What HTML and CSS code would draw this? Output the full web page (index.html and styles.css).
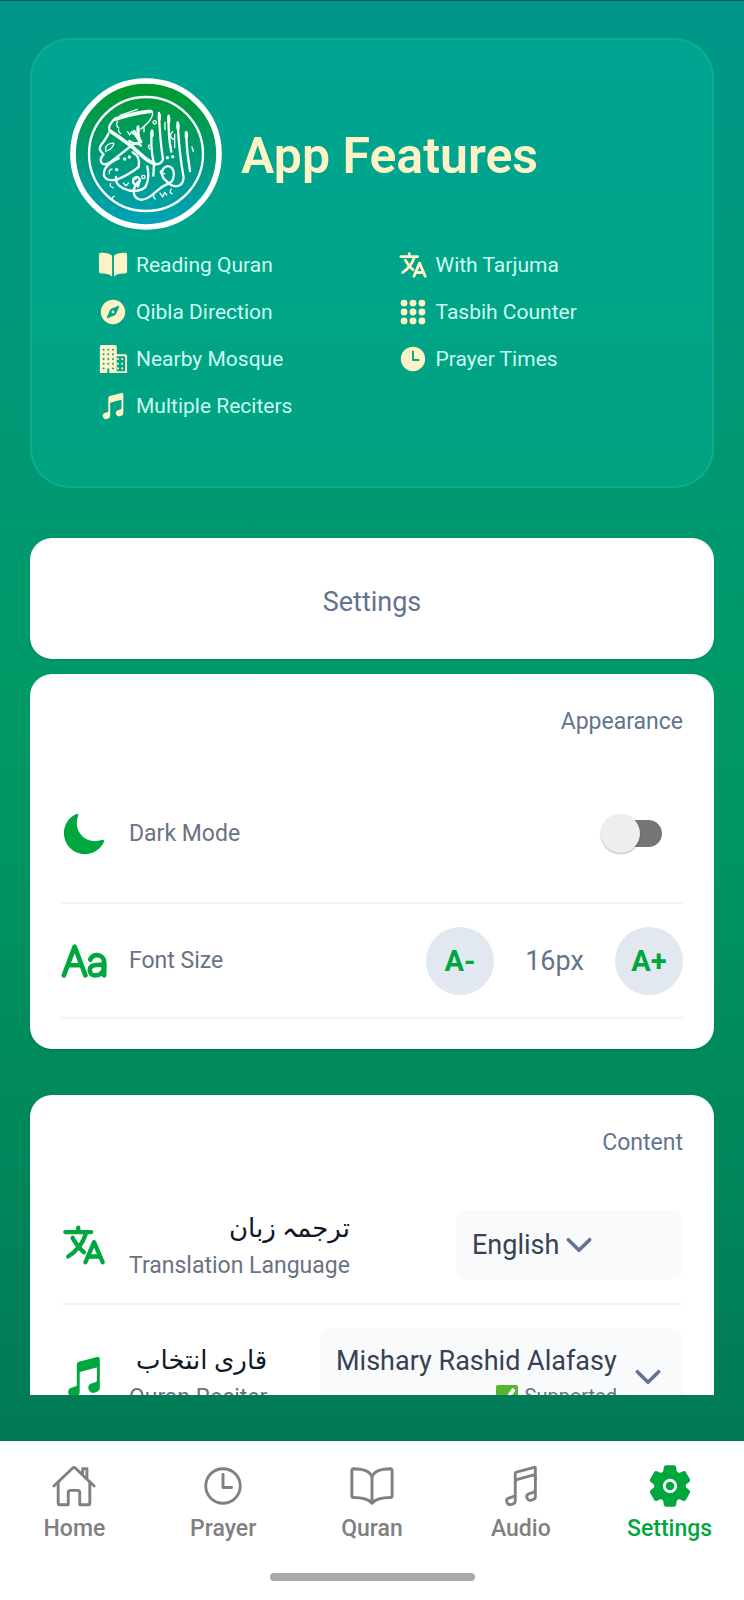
FILE: index.html
```html
<!DOCTYPE html>
<html lang="en">
<head>
<meta charset="utf-8">
<meta name="viewport" content="width=device-width, initial-scale=1">
<title>Settings</title>
<link rel="stylesheet" href="styles.css">
</head>
<body class="app">
<svg class="sprite" aria-hidden="true">
  <symbol id="language" viewBox="0 0 512 512"><g fill="none" stroke="currentColor" stroke-width="48" stroke-linecap="round" stroke-linejoin="round"><path d="M48 112h288M192 64v48M272 448l96-224 96 224M301.5 384h133M281.3 112S257 206 199 277 80 384 80 384"/><path d="M256 336s-35-27-72-75-56-85-56-85"/></g></symbol>
  <symbol id="notes" viewBox="0 0 512 512"><path fill="currentColor" d="M421.84 37.37a25.86 25.86 0 00-22.6-4.46L199.92 86.49A32.3 32.3 0 00176 118v226c0 6.74-4.36 12.56-11.11 14.83l-.12.05-52 18C92.88 383.53 80 402 80 423.91a55.54 55.54 0 0023.23 45.63A54.78 54.78 0 00135.34 480a55.82 55.82 0 0017.75-2.93l.38-.13 21.84-7.94A47.84 47.84 0 00208 423.91v-212c0-7.29 4.77-13.21 12.16-15.07l.21-.06L395 150.14a4 4 0 015 3.86v141.93c0 6.75-4.25 12.38-11.11 14.68l-.25.09-50.89 18.11A49.09 49.09 0 00304 375.92a55.67 55.67 0 0023.23 45.8 54.63 54.63 0 0049.88 7.35l.36-.12 21.84-7.95A47.83 47.83 0 00432 375.92V58a25.74 25.74 0 00-10.16-20.63z"/></symbol>
  <symbol id="chevron" viewBox="0 0 512 512"><path d="M112 184l144 144 144-144" fill="none" stroke="currentColor" stroke-width="48" stroke-linecap="round" stroke-linejoin="round"/></symbol>
</svg>

<main class="scroll">
  <section class="hero">
    <header class="hero-head">
      <svg class="logo" viewBox="30 25 456 456" role="img" aria-label="Quran emblem">
        <defs><linearGradient id="disc" x1="0" y1="0" x2="0" y2="1"><stop offset="0.05" stop-color="#009a30"/><stop offset="0.5" stop-color="#009b74"/><stop offset="0.95" stop-color="#00a2b4"/></linearGradient></defs>
        <circle cx="258" cy="253" r="219" fill="url(#disc)" stroke="#fff" stroke-width="17"/>
        <circle cx="258" cy="253" r="171" fill="none" stroke="#fff" stroke-width="7"/>
        <g fill="none" stroke="#f2fffa" stroke-linecap="round" stroke-linejoin="round">
          <g stroke-width="4">
            <path d="M180 137l52-18"/>
            <path d="M277 126q6 20-34 52"/>
            <path d="M138 246q-6-18 12-24t8 8-16 12"/>
            <path d="M173 155q-8 10 3 20M176 180q-1 10 6 12M203 186l6 10 6-10 5 8M252 170v16M315 158v22M396 232l4 14M338 186q-12 10-2 20t8-12v40"/>
            <path d="M152 342q-6 8 8 12M162 380q-8 4-4 12M284 370q-8 12 2 18M300 370l8 12 6-14 6 8M334 358q-8 12 2 14M190 340l8 8 8-8M156 298q-10 2-8 14"/>
            <circle cx="284" cy="158" r="5"/><circle cx="250" cy="322" r="5"/>
            <path d="M306 302q-8 2-4 8t12 2M268 226q-6 6 2 12"/>
          </g>
          <g stroke-width="7">
            <path d="M148 180q-4-12 14-30 50-20 113-25"/>
            <path d="M145 192q-6 14-22 34-10 14 8 28-14 14-6 26 10 10 28-4l64-50q16-10 26 2"/>
            <path d="M234 170q0 24 6 46-14 12-32-2"/>
            <path d="M297 130q2 74 12 140-8 16-26 14"/>
            <path d="M326 138q-2 60 8 108"/>
            <path d="M276 182q-6 52 6 100l-2 36"/>
            <path d="M353 158q4 90 18 166-2 24-22 26-18 0-32-18-18-14-8-34 14-16 28-2 10 20-2 40-30 14-52 34-24 22-42 20-20-4-20-26 2-16 14-28"/>
            <path d="M378 188q2 60 12 116"/>
            <path d="M218 248q24 12 18 44-30 24-66 38-32 6-38-12-4-32 44-52"/>
            <path d="M168 322q-4 22 22 34 38 18 66-4 14-22 6-62"/>
            <path d="M232 348q-16-4-12-20 12-14 20 2l-6 20"/>
          </g>
          <path stroke-width="11" d="M150 184q58 38 92 70 20 20 42 28M222 186l20 30M167 148q54-18 104-23"/>
          <path stroke-width="10" d="M194 268h.1M208 262h.1M322 264h.1M338 261h.1M170 300h.1M226 326h.1"/>
          <path stroke-width="10" d="M298 136v12M326 144v12M354 164v12M379 190v12M276 186v12M234 174v10"/>
        </g>
      </svg>
      <h1 class="title">App Features</h1>
    </header>
    <ul class="features">
      <li class="feature"><svg class="icon-s" viewBox="0 0 512 512"><path fill="currentColor" d="M202.24 74C166.11 56.75 115.61 48.3 48 48a31.36 31.36 0 00-17.92 5.33A32 32 0 0016 79.9V366c0 19.34 13.76 33.93 32 33.93 71.07 0 142.36 6.64 185.06 47a4.11 4.11 0 006.94-3V106.82a15.89 15.89 0 00-5.46-12A143 143 0 00202.24 74zM481.92 53.3A31.33 31.33 0 00464 48c-67.61.3-118.11 8.71-154.24 26a143.31 143.31 0 00-32.31 20.78 15.93 15.93 0 00-5.45 12v337.13a3.93 3.93 0 006.68 2.81c25.67-25.5 70.72-46.82 185.36-46.81a32 32 0 0032-32v-288a32 32 0 00-14.12-26.61z"/></svg>Reading Quran</li>
      <li class="feature"><svg class="icon-s"><use href="#language"/></svg>With Tarjuma</li>
      <li class="feature"><svg class="icon-s" viewBox="0 0 512 512" fill="currentColor"><circle cx="256" cy="256" r="24"/><path d="M256 48C141.31 48 48 141.31 48 256s93.31 208 208 208 208-93.31 208-208S370.69 48 256 48zm105.07 113.33l-46.88 117.2a64 64 0 01-35.66 35.66l-117.2 46.88a8 8 0 01-10.4-10.4l46.88-117.2a64 64 0 0135.66-35.66l117.2-46.88a8 8 0 0110.4 10.4z"/></svg>Qibla Direction</li>
      <li class="feature"><svg class="icon-s" viewBox="0 0 512 512"><path d="M104 104h.1M256 104h.1M408 104h.1M104 256h.1M256 256h.1M408 256h.1M104 408h.1M256 408h.1M408 408h.1" stroke="currentColor" stroke-width="116" stroke-linecap="round"/></svg>Tasbih Counter</li>
      <li class="feature"><svg class="icon-s" viewBox="0 0 512 512"><path fill="currentColor" fill-rule="evenodd" d="M56 16H288a32 32 0 0132 32V176H464a32 32 0 0132 32V480a16 16 0 01-16 16H192V416H160V496H48a16 16 0 01-16-16V48A32 32 0 0156 16zM320 208V464H464V208z"/><path d="M96 96h.1M176 96h.1M256 96h.1M96 176h.1M176 176h.1M256 176h.1M96 256h.1M176 256h.1M256 256h.1M96 336h.1M176 336h.1M256 336h.1M96 416h.1M256 416h.1" stroke="#00a487" stroke-width="34" stroke-linecap="round"/><path d="M340 256h.1M412 256h.1M340 336h.1M412 336h.1M340 416h.1M412 416h.1" stroke="currentColor" stroke-width="36" stroke-linecap="round"/></svg>Nearby Mosque</li>
      <li class="feature"><svg class="icon-s" viewBox="0 0 512 512"><path fill="currentColor" d="M256 48C141.13 48 48 141.13 48 256s93.13 208 208 208 208-93.13 208-208S370.87 48 256 48zm96 240h-96a16 16 0 01-16-16V128a16 16 0 0132 0v128h80a16 16 0 010 32z"/></svg>Prayer Times</li>
      <li class="feature"><svg class="icon-s"><use href="#notes"/></svg>Multiple Reciters</li>
    </ul>
  </section>

  <h2 class="card banner">Settings</h2>

  <section class="card">
    <h3 class="card-title">Appearance</h3>
    <div class="row row-tall">
      <svg class="icon-m" viewBox="0 0 512 512"><path fill="currentColor" d="M264 480A232 232 0 0132 248c0-94 54-178.28 137.61-214.67a16 16 0 0121.06 21.06C181.07 76.43 176 104.66 176 136c0 110.28 89.72 200 200 200 31.34 0 59.57-5.07 81.61-14.67a16 16 0 0121.06 21.06C442.28 426 358 480 264 480z"/></svg>
      <label class="label" for="dark">Dark Mode</label>
      <input class="switch" type="checkbox" role="switch" id="dark">
    </div>
    <div class="row">
      <svg class="icon-m" viewBox="0 0 512 512" fill="none" stroke="currentColor" stroke-width="52" stroke-linecap="round" stroke-linejoin="round"><path d="M32 415.5l120-320 120 320M230 303.5H74M326 239.5c12.19-28.69 41-48 74-48h0c46 0 80 32 80 80v144"/><path d="M320 358.5c0 36 26.86 58 60 58 54 0 100-27 100-106v-15c-20 0-58 1-92 5-32.77 3.86-68 19-68 58z"/></svg>
      <span class="label">Font Size</span>
      <div class="stepper">
        <button class="step" type="button" aria-label="Decrease font size">A-</button>
        <output class="size">16px</output>
        <button class="step" type="button" aria-label="Increase font size">A+</button>
      </div>
    </div>
  </section>

  <section class="card card-content">
    <h3 class="card-title">Content</h3>
    <div class="row">
      <svg class="icon-m"><use href="#language"/></svg>
      <label class="label" for="lang"><span class="urdu" lang="ur" dir="rtl">ترجمہ زبان</span>Translation Language</label>
      <div class="picker picker-lang">
        <select class="select" id="lang"><option>English</option></select>
        <svg class="chevron"><use href="#chevron"/></svg>
      </div>
    </div>
    <div class="row">
      <svg class="icon-m"><use href="#notes"/></svg>
      <label class="label" for="reciter"><span class="urdu" lang="ur" dir="rtl">قاری انتخاب</span>Quran Reciter</label>
      <div class="picker picker-reciter">
        <div class="reciter">
          <select class="select" id="reciter"><option>Mishary Rashid Alafasy</option></select>
          <span class="status"><svg class="check" viewBox="0 0 22 22"><rect width="22" height="22" rx="2" fill="#58b530"/><path d="M4 11l5 6 9-13" fill="none" stroke="#fff" stroke-width="4"/></svg>Supported</span>
        </div>
        <svg class="chevron"><use href="#chevron"/></svg>
      </div>
    </div>
  </section>
</main>

<footer class="dock">
  <nav class="tabs">
    <a class="tab" href="#home"><svg class="icon-m line" viewBox="0 0 512 512"><path d="M80 212v236a16 16 0 0016 16h96V328a24 24 0 0124-24h80a24 24 0 0124 24v136h96a16 16 0 0016-16V212"/><path d="M480 256L266.89 52c-5-5.28-16.69-5.34-21.78 0L32 256M400 179V64h-48v69"/></svg>Home</a>
    <a class="tab" href="#prayer"><svg class="icon-m line" viewBox="0 0 512 512"><path d="M256 64C150 64 64 150 64 256s86 192 192 192 192-86 192-192S362 64 256 64z"/><path d="M256 128v144h96"/></svg>Prayer</a>
    <a class="tab" href="#quran"><svg class="icon-m line" viewBox="0 0 512 512"><path d="M256 160c16-63.16 76.43-95.41 208-96a15.94 15.94 0 0116 16v288a16 16 0 01-16 16c-128 0-177.45 25.81-208 64-30.37-38-80-64-208-64-9.88 0-16-8.05-16-17.93V80a15.94 15.94 0 0116-16c131.57.59 192 32.84 208 96zM256 160v288"/></svg>Quran</a>
    <a class="tab" href="#audio"><svg class="icon-m line" viewBox="0 0 512 512"><path d="M192 218v-6c0-14.84 10-27 24.24-30.59l174.59-46.68A20 20 0 01416 154v22"/><path d="M416 295.94v80c0 13.91-8.93 25.59-22 30l-22 8c-25.9 8.72-52-10.42-52-38h0a33.37 33.37 0 0123-32l51-18.15c13.07-4.4 22-15.94 22-29.85V58a10 10 0 00-12.6-9.61L204 102a16.48 16.48 0 00-12 16v226c0 13.91-8.93 25.6-22 30l-52 18c-13.88 4.68-22 17.22-22 32h0c0 27.58 26.52 46.55 52 38l22-8c13.07-4.4 22-16.08 22-30v-226M416 176v120"/></svg>Audio</a>
    <a class="tab tab-active" href="#settings" aria-current="page"><svg class="icon-m" viewBox="0 0 512 512" fill="currentColor"><circle cx="256" cy="256" r="48"/><path d="M470.39 300l-.47-.38-31.56-24.75a16.11 16.11 0 01-6.1-13.33v-11.56a16 16 0 016.11-13.22L469.92 212l.47-.38a26.68 26.68 0 005.9-34.06l-42.71-73.9a1.59 1.59 0 01-.13-.22A26.86 26.86 0 00401 92.14l-.35.13-37.1 14.93a15.94 15.94 0 01-14.47-1.29q-4.92-3.1-10-5.86a15.94 15.94 0 01-8.19-11.82l-5.59-39.59-.12-.72A27.22 27.22 0 00298.76 26h-85.52a26.92 26.92 0 00-26.45 22.39l-.09.56-5.57 39.67a16 16 0 01-8.13 11.82 175.21 175.21 0 00-10 5.82 15.92 15.92 0 01-14.43 1.27l-37.13-15-.35-.14a26.87 26.87 0 00-32.48 11.34l-.13.22-42.77 73.95a26.71 26.71 0 005.9 34.1l.47.38 31.56 24.75a16.11 16.11 0 016.1 13.33v11.56a16 16 0 01-6.11 13.22L42.08 300l-.47.38a26.68 26.68 0 00-5.9 34.06l42.71 73.9a1.59 1.59 0 01.13.22 26.86 26.86 0 0032.45 11.3l.35-.13 37.07-14.93a15.94 15.94 0 0114.47 1.29q4.92 3.11 10 5.86a15.94 15.94 0 018.19 11.82l5.56 39.59.12.72A27.22 27.22 0 00213.24 486h85.52a26.92 26.92 0 0026.45-22.39l.09-.56 5.57-39.67a16 16 0 018.18-11.82c3.42-1.84 6.76-3.79 10-5.82a15.92 15.92 0 0114.43-1.27l37.13 14.95.35.14a26.85 26.85 0 0032.48-11.34 2.53 2.53 0 01.13-.22l42.71-73.89a26.7 26.7 0 00-5.89-34.11zm-134.48-40.24a80 80 0 11-83.66-83.67 80.21 80.21 0 0183.66 83.67z"/></svg>Settings</a>
  </nav>
  <div class="grip"></div>
</footer>
</body>
</html>
```

FILE: styles.css
```css
:root {
  --green: #00a63e;
  --slate: #62748e;
  --cream: #fef3c6;
  --mint: #cbfbf1;
}

* {
  box-sizing: border-box;
}

.app {
  display: flex;
  flex-direction: column;
  height: 100vh;
  margin: 0;
  font-family: Roboto, "DejaVu Sans", sans-serif;
  font-size: 23px;
  background: linear-gradient(#009689, #009966 45%, #007a55 90%);
}

.sprite {
  position: absolute;
  width: 0;
  height: 0;
}

.scroll {
  flex: 1;
  min-height: 0;
  margin-bottom: 46px;
  padding: 37px 30px 0;
  overflow: hidden;
  border-top: 1px solid #0b5a50;
}

.hero {
  margin-bottom: 50px;
  padding: 38px 38px 58px;
  border: 2px solid #0cae8f;
  border-radius: 40px;
  background: linear-gradient(#00a592, #00a37f);
}

.hero-head {
  display: flex;
  align-items: center;
  gap: 19px;
  margin-bottom: 10px;
}

.logo {
  flex: none;
  width: 152px;
  height: 152px;
}

.title {
  margin: 0;
  padding-top: 4px;
  color: var(--cream);
  font-size: 50px;
  font-weight: 600;
}

.features {
  display: grid;
  grid-template-columns: 13fr 12fr;
  margin: 0;
  padding: 0 0 0 28px;
  list-style: none;
}

.feature {
  display: flex;
  align-items: center;
  gap: 8px;
  height: 47px;
  color: var(--mint);
  font-size: 21px;
  line-height: 28px;
  padding-top: 2px;
}

.icon-s {
  flex: none;
  width: 30px;
  height: 30px;
  color: var(--cream);
}

.icon-m {
  flex: none;
  width: 46px;
  height: 46px;
}

.card {
  margin: 0 0 46px;
  padding: 30px 31px;
  border-radius: 22px;
  background: #fff;
  box-shadow: 0 1px 2px rgb(0 0 0 / 16%);
}

.banner {
  margin-bottom: 15px;
  padding: 34px 30px 27px;
  color: var(--slate);
  font-size: 27px;
  font-weight: 400;
  line-height: 60px;
  text-align: center;
}

.card-title {
  margin: 0 0 26px;
  padding-top: 1px;
  color: var(--slate);
  font-size: 23px;
  font-weight: 400;
  line-height: 34px;
  text-align: right;
}

.row {
  display: flex;
  align-items: center;
  padding: 23px 0 22px;
  border-bottom: 2px solid #f3f5f6;
  color: var(--green);
}

.row-tall {
  padding: 45px 0;
}

.label {
  margin: 0 auto 0 22px;
  color: #6a7282;
  line-height: 30px;
}

.urdu {
  display: block;
  padding-bottom: 4px;
  color: #101828;
  font-size: 26px;
  line-height: 38px;
}

.switch {
  position: relative;
  width: 54px;
  height: 27px;
  margin: 10px 21px 10px 0;
  border-radius: 14px;
  background: #757577;
  appearance: none;
}

.switch::before {
  content: "";
  position: absolute;
  top: -6px;
  left: -7px;
  width: 39px;
  height: 39px;
  border-radius: 50%;
  background: #eee;
  box-shadow: 0 1px 2px rgb(0 0 0 / 30%);
}

.switch:checked {
  background: var(--green);
}

.switch:checked::before {
  left: 22px;
}

.stepper {
  display: flex;
  align-items: center;
}

.step {
  width: 68px;
  height: 68px;
  padding: 0;
  border: 0;
  border-radius: 50%;
  background: #e2e8f0;
  color: var(--green);
  font-family: inherit;
  font-size: 29px;
  font-weight: 700;
}

.size {
  width: 121px;
  color: var(--slate);
  font-size: 27px;
  text-align: center;
}

.picker {
  display: flex;
  align-items: center;
  padding: 14px 16px;
  border-radius: 12px;
  background: #f8fafc;
  color: var(--slate);
}

.picker-lang {
  width: 227px;
  height: 70px;
}

.picker-reciter {
  gap: 12px;
}

.select {
  padding: 0;
  border: 0;
  background: transparent;
  color: #364153;
  font-family: inherit;
  font-size: 27px;
  line-height: 38px;
  appearance: none;
}

.reciter {
  display: flex;
  flex-direction: column;
  align-items: flex-end;
}

.status {
  display: flex;
  align-items: center;
  gap: 7px;
  color: #6a7282;
  font-size: 20px;
  line-height: 32px;
}

.check {
  width: 22px;
  height: 22px;
}

.chevron {
  flex: none;
  width: 38px;
  height: 38px;
}

.dock {
  padding: 22px 0 19px;
  background: #fff;
}

.tabs {
  display: grid;
  grid-template-columns: repeat(5, 1fr);
}

.tab {
  display: flex;
  flex-direction: column;
  align-items: center;
  gap: 6px;
  color: #808080;
  font-weight: 500;
  line-height: 28px;
  text-decoration: none;
}

.tab-active {
  color: var(--green);
}

.line {
  fill: none;
  stroke: currentColor;
  stroke-width: 32;
  stroke-linecap: round;
  stroke-linejoin: round;
}

.grip {
  width: 205px;
  height: 8px;
  margin: 30px auto 0;
  border-radius: 4px;
  background: #a9a9a9;
}
```
